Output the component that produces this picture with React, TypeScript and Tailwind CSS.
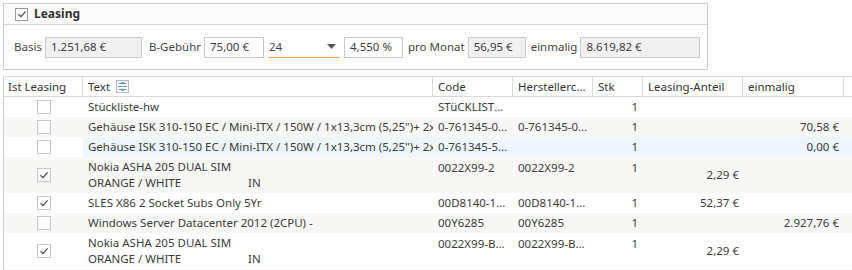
import React from 'react';

const font = { fontFamily: '"Noto Sans", "Open Sans", sans-serif' };

type Row = {
  checked: boolean;
  text: string[];
  code: string;
  herst: string;
  stk: string;
  anteil: string;
  einmalig: string;
  tall?: boolean;
  bg: 'white' | 'gray' | 'blue';
};

const rows: Row[] = [
  { checked: false, text: ['Stückliste-hw'], code: 'STüCKLISTE-HW', herst: '', stk: '1', anteil: '', einmalig: '', bg: 'white' },
  { checked: false, text: ['Gehäuse ISK 310-150 EC / Mini-ITX / 150W / 1x13,3cm (5,25")+ 2x6,35cm'], code: '0-761345-00310', herst: '0-761345-00310', stk: '1', anteil: '', einmalig: '70,58 €', bg: 'gray' },
  { checked: false, text: ['Gehäuse ISK 310-150 EC / Mini-ITX / 150W / 1x13,3cm (5,25")+ 2x6,35cm'], code: '0-761345-50310', herst: '', stk: '1', anteil: '', einmalig: '0,00 €', bg: 'blue' },
  { checked: true, text: ['Nokia ASHA 205 DUAL SIM', 'ORANGE / WHITE'], code: '0022X99-2', herst: '0022X99-2', stk: '1', anteil: '2,29 €', einmalig: '', tall: true, bg: 'gray' },
  { checked: true, text: ['SLES X86 2 Socket Subs Only 5Yr'], code: '00D8140-1234', herst: '00D8140-1234', stk: '1', anteil: '52,37 €', einmalig: '', bg: 'white' },
  { checked: false, text: ['Windows Server Datacenter 2012 (2CPU) -'], code: '00Y6285', herst: '00Y6285', stk: '1', anteil: '', einmalig: '2.927,76 €', bg: 'gray' },
  { checked: true, text: ['Nokia ASHA 205 DUAL SIM', 'ORANGE / WHITE'], code: '0022X99-BLK12', herst: '0022X99-BLK12', stk: '1', anteil: '2,29 €', einmalig: '', tall: true, bg: 'white' },
];

const Check = ({ checked, size = 'sm' }: { checked: boolean; size?: 'sm' | 'lg' }) => (
  <div
    className={`flex flex-none items-center justify-center border bg-white ${
      size === 'lg' ? 'h-[13px] w-[13px] border-[#9a9a9a]' : 'h-[14px] w-[14px] border-[#c6c6c6]'
    }`}
  >
    {checked && (
      <svg width="10" height="10" viewBox="0 0 10 10">
        <path d="M1.5 5.2 L4 7.6 L8.6 2.4" fill="none" stroke="#444" strokeWidth="1.2" />
      </svg>
    )}
  </div>
);

const Field = ({ value, gray, w }: { value: string; gray?: boolean; w: string }) => (
  <div
    className={`flex h-[21px] flex-none items-center whitespace-nowrap border border-[#c8c8c8] px-[5px] text-[#3c3c3c] ${w} ${
      gray ? 'bg-[#f0f0f0]' : 'bg-white'
    }`}
  >
    {value}
  </div>
);

const cols = 'grid grid-cols-[79px_350px_80px_80px_50px_100px_101px_1fr]';

const App: React.FC = () => {
  return (
    <div className="h-[270px] w-[852px] overflow-hidden bg-white pl-[3px] pt-[3px] text-[11.5px] text-[#3b3b3b]" style={font}>
      {/* Leasing group */}
      <div className="w-[705px] border border-[#cbcbcb]">
        <div className="flex h-[21px] items-center gap-[6px] border-b border-[#d4d4d4] bg-[#fafafa] pl-[11px]">
          <Check checked size="lg" />
          <span className="text-[12px] font-bold text-[#333]">Leasing</span>
        </div>
        <div className="flex h-[44px] items-center whitespace-nowrap pl-[10px] text-[#444]">
          <span className="mr-[3px]">Basis</span>
          <Field value="1.251,68 €" gray w="w-[97px]" />
          <span className="ml-[7px] mr-[3px]">B-Gebühr</span>
          <Field value="75,00 €" w="w-[60px]" />
          <div className="ml-[4px] flex h-[21px] w-[72px] flex-none items-center justify-between border-b border-[#f2a93b] pl-[1px] pr-[4px]">
            <span>24</span>
            <svg width="9" height="5" viewBox="0 0 9 5">
              <path d="M0 0 H9 L4.5 5 Z" fill="#555" />
            </svg>
          </div>
          <div className="ml-[4px]">
            <Field value="4,550 %" w="w-[59px]" />
          </div>
          <span className="ml-[5px] mr-[3px]">pro Monat</span>
          <Field value="56,95 €" gray w="w-[58px]" />
          <span className="ml-[5px] mr-[3px]">einmalig</span>
          <Field value="8.619,82 €" gray w="w-[120px]" />
        </div>
      </div>

      {/* Grid */}
      <div className="mt-[6px] border-l border-[#d0d0d0]">
        <div className={`${cols} h-[21px] border-y border-[#d8d8d8] text-[#333]`}>
          <div className="flex items-center border-r border-[#d8d8d8] pl-[4px]">Ist Leasing</div>
          <div className="flex items-center gap-[6px] border-r border-[#d8d8d8] pl-[5px]">
            <span>Text</span>
            <svg width="13" height="13" viewBox="0 0 13 13">
              <rect x="0.5" y="0.5" width="12" height="12" fill="white" stroke="#b8b8b8" />
              <path d="M3 3.5 H10 M2 6.5 H11 M3 9.5 H10" stroke="#6b8fb5" strokeWidth="1" />
              <path d="M5 2 L6.5 4.5 L8 2 Z M5 11 L6.5 8.5 L8 11 Z" fill="#6b8fb5" />
            </svg>
          </div>
          <div className="flex items-center border-r border-[#d8d8d8] pl-[5px]">Code</div>
          <div className="flex items-center overflow-hidden border-r border-[#d8d8d8] pl-[5px] pr-[2px]">
            <span className="truncate">Herstellercode</span>
          </div>
          <div className="flex items-center border-r border-[#d8d8d8] pl-[5px]">Stk</div>
          <div className="flex items-center border-r border-[#d8d8d8] pl-[5px]">Leasing-Anteil</div>
          <div className="flex items-center border-r border-[#d8d8d8] pl-[5px]">einmalig</div>
          <div />
        </div>

        {rows.map((r, i) => {
          const rowBg = r.bg === 'gray' ? 'bg-[#f7f7f5]' : 'bg-white';
          const cellBg = r.bg === 'blue' ? 'bg-[#eef5fd]' : '';
          const h = r.tall ? 'h-[36px]' : 'h-[20px]';
          return (
            <div key={i} className={`${cols} ${h} ${rowBg}`}>
              <div className="flex items-center justify-center pl-[1px]">
                <Check checked={r.checked} />
              </div>
              <div className={`flex flex-col justify-center overflow-hidden whitespace-nowrap pl-[5px] leading-[16px] ${cellBg}`}>
                <span>{r.text[0]}</span>
                {r.text[1] && (
                  <span>
                    <span className="inline-block w-[160px]">{r.text[1]}</span>
                    <span>IN</span>
                  </span>
                )}
              </div>
              <div className={`overflow-hidden pl-[5px] pr-[4px] ${r.tall ? 'pt-[2px]' : 'flex items-center'} ${cellBg}`}>
                <span className="block truncate">{r.code}</span>
              </div>
              <div className={`overflow-hidden pl-[5px] pr-[4px] ${r.tall ? 'pt-[2px]' : 'flex items-center'} ${cellBg}`}>
                <span className="block truncate">{r.herst}</span>
              </div>
              <div className={`pr-[5px] text-right ${r.tall ? 'pt-[2px]' : 'flex items-center justify-end'} ${cellBg}`}>
                {r.stk}
              </div>
              <div className={`flex items-center justify-end pr-[4px] ${cellBg}`}>{r.anteil}</div>
              <div className={`flex items-center justify-end pr-[5px] ${cellBg}`}>{r.einmalig}</div>
              <div className={cellBg} />
            </div>
          );
        })}
        <div className={`${cols} h-[20px] bg-[#f7f7f5]`} />
      </div>
    </div>
  );
};

export default App;
